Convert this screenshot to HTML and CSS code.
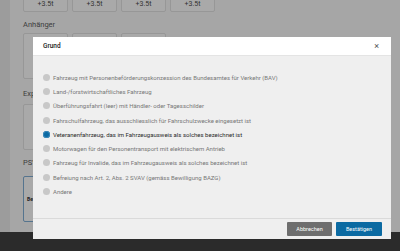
FILE: index.html
```html
<!DOCTYPE html>
<html lang="de">
<head>
<meta charset="utf-8">
<title>Grund</title>
<link rel="stylesheet" href="styles.css">
</head>
<body>
<div class="app">
  <div class="main">
    <div class="rail"></div>
    <div class="panel">
      <div class="cards top">
        <div class="card"><span>+3.5t</span></div>
        <div class="card"><span>+3.5t</span></div>
        <div class="card"><span>+3.5t</span></div>
        <div class="card"><span>+3.5t</span></div>
      </div>
      <div class="label l1">Anhänger</div>
      <div class="cards">
        <div class="card"></div>
        <div class="card"></div>
        <div class="card"></div>
      </div>
      <div class="label l2">Export</div>
      <div class="cards">
        <div class="card"></div>
      </div>
      <div class="label l3">PSV</div>
      <div class="cards">
        <div class="card active"><b>Befreiung</b></div>
      </div>
    </div>
  </div>
  <div class="footer"></div>
</div>

<div class="modal">
  <div class="modal-head">
    <span class="title">Grund</span>
    <span class="close">×</span>
  </div>
  <div class="modal-body">
    <label class="opt"><span class="radio"></span>Fahrzeug mit Personenbeförderungskonzession des Bundesamtes für Verkehr (BAV)</label>
    <label class="opt"><span class="radio"></span>Land-/forstwirtschaftliches Fahrzeug</label>
    <label class="opt"><span class="radio"></span>Überführungsfahrt (leer) mit Händler- oder Tagesschilder</label>
    <label class="opt"><span class="radio"></span>Fahrschulfahrzeug, das ausschliesslich für Fahrschulzwecke eingesetzt ist</label>
    <label class="opt sel"><span class="radio"></span>Veteranenfahrzeug, das im Fahrzeugausweis als solches bezeichnet ist</label>
    <label class="opt"><span class="radio"></span>Motorwagen für den Personentransport mit elektrischem Antrieb</label>
    <label class="opt"><span class="radio"></span>Fahrzeug für Invalide, das im Fahrzeugausweis als solches bezeichnet ist</label>
    <label class="opt"><span class="radio"></span>Befreiung nach Art. 2, Abs. 2 SVAV (gemäss Bewilligung BAZG)</label>
    <label class="opt"><span class="radio"></span>Andere</label>
  </div>
  <div class="modal-foot">
    <button class="btn cancel">Abbrechen</button>
    <button class="btn ok">Bestätigen</button>
  </div>
</div>
</body>
</html>
```

FILE: styles.css
```css
* { box-sizing: border-box; }
html, body { margin: 0; padding: 0; }
body {
  width: 400px;
  height: 251px;
  overflow: hidden;
  font-family: Roboto, "Liberation Sans", sans-serif;
  background: #a6a6a6;
  position: relative;
}
.app {
  height: 251px;
  display: flex;
  flex-direction: column;
}
.main {
  flex: 1;
  display: flex;
  overflow: hidden;
}
.rail {
  width: 10px;
  background: #9c9c9c;
}
.panel {
  flex: 1;
  background: #a6a6a6;
  padding-left: 13px;
}
.footer {
  height: 19px;
  background: #2b2b2b;
}
.cards {
  display: flex;
  gap: 4px;
}
.cards.top { margin-top: -34px; }
.card {
  width: 45px;
  height: 46px;
  border: 1px solid #979797;
  border-radius: 2px;
  background: #a9a9a9;
  display: flex;
  align-items: flex-end;
  justify-content: center;
  font-size: 7px;
  color: #333;
}
.card span { padding-bottom: 3px; }
.card.active {
  border-color: #55748e;
  align-items: center;
  justify-content: flex-start;
  padding-left: 3px;
  font-size: 5px;
  color: #222;
}
.label {
  font-size: 7.5px;
  line-height: 10px;
  color: #3c3c3c;
}
.l1 { margin: 8px 0 3px; }
.l2 { margin: 10px 0 5px; }
.l3 { margin: 8px 0 8px; }

.modal {
  position: absolute;
  left: 33px;
  top: 37px;
  width: 358px;
  height: 202px;
  background: #efefef;
  display: flex;
  flex-direction: column;
}
.modal-head {
  height: 19px;
  background: #fff;
  display: flex;
  align-items: center;
  justify-content: space-between;
  padding: 0 12px 0 10px;
  border-bottom: 1px solid #e4e4e4;
}
.title {
  font-size: 6.5px;
  font-weight: 500;
  color: #222;
}
.close {
  font-size: 9px;
  color: #555;
  line-height: 1;
}
.modal-body {
  flex: 1;
  padding: 14px 10px 0 10px;
  display: flex;
  flex-direction: column;
}
.opt {
  height: 14.3px;
  display: flex;
  align-items: center;
  gap: 3px;
  font-size: 6px;
  color: #777;
  white-space: nowrap;
}
.radio {
  width: 7px;
  height: 7px;
  border-radius: 50%;
  background: #c8c8c8;
  flex: none;
}
.opt.sel { color: #2a2a2a; }
.opt.sel .radio {
  background: #0b6aa3;
  box-shadow: inset 0 0 0 1px #3d87b8;
}
.modal-foot {
  height: 21px;
  border-top: 1px solid #dadada;
  display: flex;
  justify-content: flex-end;
  align-items: center;
  gap: 4px;
  padding-right: 9px;
}
.btn {
  height: 14px;
  border: none;
  border-radius: 1px;
  font-family: Roboto, "Liberation Sans", sans-serif;
  font-size: 5.5px;
  color: #fff;
  padding: 0;
}
.cancel { width: 45px; background: #6e6e6e; }
.ok { width: 46px; background: #0b6aa2; }
```
